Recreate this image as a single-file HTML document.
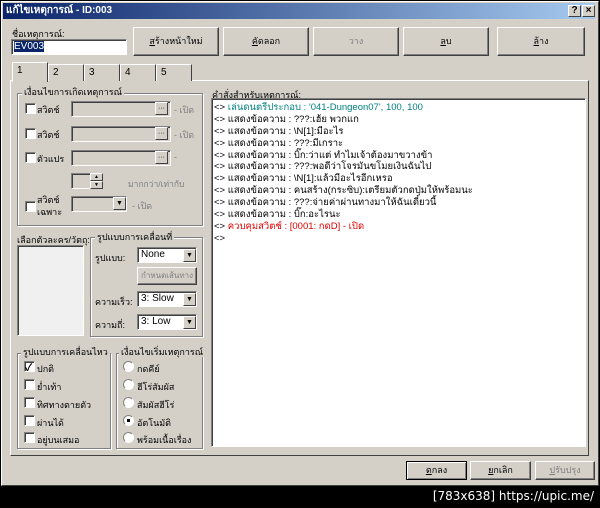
<!DOCTYPE html>
<html><head><meta charset="utf-8"><style>
*{box-sizing:border-box;margin:0;padding:0}
body{width:600px;height:508px;background:#000;position:relative;overflow:hidden;font-family:"Liberation Sans","Noto Sans CJK SC",sans-serif;font-size:9px;color:#000}
.a{position:absolute;white-space:nowrap}
.win{left:1px;top:1px;width:598px;height:485px;background:#d4d0c8;border:1px solid;border-color:#fff #404040 #404040 #fff}
.title{left:3px;top:3px;width:592px;height:16px;background:linear-gradient(90deg,#0a246a,#a6caf0);color:#fff;font-weight:bold;font-size:10px;line-height:16px;padding-left:3px}
.tb{top:5px;width:13px;height:12px;background:#d4d0c8;border:1px solid;border-color:#fff #404040 #404040 #fff;font-size:10px;font-weight:bold;text-align:center;line-height:10px}
.btn{background:#d4d0c8;border:1px solid;border-color:#fff #404040 #404040 #fff;box-shadow:inset -1px -1px #808080;text-align:center;font-size:9px}
.sunk{background:#fff;border:1px solid;border-color:#808080 #fff #fff #808080;box-shadow:inset 1px 1px #404040}
.dis{background:#d4d0c8}
.grp{border:1px solid #808080;box-shadow:1px 1px #fff, inset 1px 1px #fff}
.gl{background:#d4d0c8;padding:0 2px;font-size:9px;line-height:10px}
.cb{width:11px;height:11px;background:#fff;border:1px solid;border-color:#808080 #fff #fff #808080;box-shadow:inset 1px 1px #404040}
.rb{width:11px;height:11px;border-radius:50%;background:#fff;border:1px solid;border-color:#808080 #fff #fff #808080}
.gray{color:#808080}
.tab{top:64px;height:17px;border:1px solid;border-color:#fff #404040 transparent #fff;border-bottom:none;padding-left:4px;line-height:16px;font-size:10px;background:#d4d0c8}
.list div{height:11.9px;line-height:12px;font-size:9.5px;white-space:nowrap}
.dd{width:13px;height:13px;background:#d4d0c8;border:1px solid;border-color:#fff #404040 #404040 #fff;font-size:7px;text-align:center;line-height:11px}
.v{font-size:10px}
</style></head><body>
<div class="a win"></div>
<div class="a title">แก้ไขเหตุการณ์ - ID:003</div>
<div class="a tb" style="left:568px">?</div>
<div class="a tb" style="left:582px">×</div>

<div class="a" style="left:12px;top:27px">ชื่อเหตุการณ์:</div>
<div class="a sunk" style="left:11px;top:39px;width:116px;height:16px;padding:1px 2px"><span style="background:#0a246a;color:#fff;line-height:12px;font-size:10px">EV003</span></div>
<div class="a btn" style="left:133px;top:27px;width:86px;height:29px;line-height:27px"><u>ส</u>ร้างหน้าใหม่</div>
<div class="a btn" style="left:223px;top:27px;width:86px;height:29px;line-height:27px"><u>คั</u>ดลอก</div>
<div class="a btn gray" style="left:313px;top:27px;width:86px;height:29px;line-height:27px">วาง</div>
<div class="a btn" style="left:403px;top:27px;width:86px;height:29px;line-height:27px"><u>ล</u>บ</div>
<div class="a btn" style="left:497px;top:27px;width:88px;height:29px;line-height:27px"><u>ล้</u>าง</div>

<div class="a" style="left:10px;top:80px;width:579px;height:376px;border:1px solid;border-color:#fff #404040 #404040 #fff"></div>
<div class="a tab" style="left:12px;width:36px;top:62px;height:20px;z-index:2">1</div>
<div class="a tab" style="left:48px;width:36px">2</div>
<div class="a tab" style="left:84px;width:36px">3</div>
<div class="a tab" style="left:120px;width:36px">4</div>
<div class="a tab" style="left:156px;width:36px">5</div>

<div class="a grp" style="left:17px;top:93px;width:186px;height:133px"></div>
<div class="a gl" style="left:22px;top:87px">เงื่อนไขการเกิดเหตุการณ์</div>
<div class="a cb" style="left:25px;top:103px"></div><div class="a" style="left:37px;top:103px">สวิตช์</div>
<div class="a sunk dis" style="left:71px;top:101px;width:100px;height:16px"></div><div class="a dd" style="left:155px;top:102px">···</div><div class="a gray" style="left:174px;top:103px">- เปิด</div>
<div class="a cb" style="left:25px;top:128px"></div><div class="a" style="left:37px;top:128px">สวิตช์</div>
<div class="a sunk dis" style="left:71px;top:126px;width:100px;height:16px"></div><div class="a dd" style="left:155px;top:127px">···</div><div class="a gray" style="left:174px;top:128px">- เปิด</div>
<div class="a cb" style="left:25px;top:152px"></div><div class="a" style="left:37px;top:152px">ตัวแปร</div>
<div class="a sunk dis" style="left:71px;top:150px;width:100px;height:16px"></div><div class="a dd" style="left:155px;top:151px">···</div><div class="a gray" style="left:174px;top:152px">-</div>
<div class="a sunk dis" style="left:71px;top:173px;width:32px;height:16px"></div><div class="a dd" style="left:90px;top:173px;height:8px;line-height:6px;font-size:5px">▲</div><div class="a dd" style="left:90px;top:181px;height:8px;line-height:6px;font-size:5px">▼</div><div class="a gray" style="left:128px;top:177px;font-size:8.5px">มากกว่า/เท่ากับ</div>
<div class="a cb" style="left:25px;top:201px"></div><div class="a" style="left:37px;top:194px;line-height:12px">สวิตช์<br>เฉพาะ</div>
<div class="a sunk dis" style="left:71px;top:196px;width:56px;height:16px"></div><div class="a dd" style="left:113px;top:197px">▼</div><div class="a gray" style="left:132px;top:199px">- เปิด</div>

<div class="a" style="left:17px;top:233px">เลือกตัวละคร/วัตถุ:</div>
<div class="a sunk" style="left:17px;top:245px;width:67px;height:91px;background:#f0f0f0"></div>

<div class="a grp" style="left:90px;top:237px;width:113px;height:100px"></div>
<div class="a gl" style="left:95px;top:232px">รูปแบบการเคลื่อนที่</div>
<div class="a" style="left:95px;top:251px">รูปแบบ:</div>
<div class="a sunk v" style="left:137px;top:247px;width:60px;height:16px;padding:1px 3px">None</div><div class="a dd" style="left:183px;top:249px">▼</div>
<div class="a btn gray" style="left:137px;top:267px;width:60px;height:18px;line-height:16px;font-size:8px">กำหนดเส้นทาง</div>
<div class="a" style="left:95px;top:295px">ความเร็ว:</div>
<div class="a sunk v" style="left:137px;top:291px;width:60px;height:16px;padding:1px 3px">3: Slow</div><div class="a dd" style="left:183px;top:293px">▼</div>
<div class="a" style="left:95px;top:318px">ความถี่:</div>
<div class="a sunk v" style="left:137px;top:314px;width:60px;height:16px;padding:1px 3px">3: Low</div><div class="a dd" style="left:183px;top:316px">▼</div>

<div class="a grp" style="left:17px;top:353px;width:94px;height:96px"></div>
<div class="a gl" style="left:21px;top:347px">รูปแบบการเคลื่อนไหว</div>
<div class="a cb" style="left:24px;top:361px"></div><div class="a" style="left:37px;top:362px">ปกติ</div><div class="a" style="left:25px;top:359px;font-size:10px;font-weight:bold">✓</div>
<div class="a cb" style="left:24px;top:379px"></div><div class="a" style="left:37px;top:380px">ย่ำเท้า</div>
<div class="a cb" style="left:24px;top:397px"></div><div class="a" style="left:37px;top:398px">ทิศทางตายตัว</div>
<div class="a cb" style="left:24px;top:415px"></div><div class="a" style="left:37px;top:416px">ผ่านได้</div>
<div class="a cb" style="left:24px;top:432px"></div><div class="a" style="left:37px;top:433px">อยู่บนเสมอ</div>

<div class="a grp" style="left:116px;top:353px;width:87px;height:96px"></div>
<div class="a gl" style="left:119px;top:347px">เงื่อนไขเริ่มเหตุการณ์</div>
<div class="a rb" style="left:123px;top:361px"></div><div class="a" style="left:137px;top:362px">กดคีย์</div>
<div class="a rb" style="left:123px;top:379px"></div><div class="a" style="left:137px;top:380px">ฮีโร่สัมผัส</div>
<div class="a rb" style="left:123px;top:397px"></div><div class="a" style="left:137px;top:398px">สัมผัสฮีโร่</div>
<div class="a rb" style="left:123px;top:415px"><div style="width:3px;height:3px;background:#000;margin:3px"></div></div><div class="a" style="left:137px;top:416px">อัตโนมัติ</div>
<div class="a rb" style="left:123px;top:432px"></div><div class="a" style="left:137px;top:433px">พร้อมเนื้อเรื่อง</div>

<div class="a" style="left:212px;top:88px">คำสั่งสำหรับเหตุการณ์:</div>
<div class="a sunk list" style="left:211px;top:98px;width:375px;height:349px;padding:3px 2px">
<div>&lt;&gt; <span style="color:#008080">เล่นดนตรีประกอบ : '041-Dungeon07', 100, 100</span></div>
<div>&lt;&gt; แสดงข้อความ : ???:เฮ้ย พวกแก</div>
<div>&lt;&gt; แสดงข้อความ : \N[1]:มีอะไร</div>
<div>&lt;&gt; แสดงข้อความ : ???:มีเกราะ</div>
<div>&lt;&gt; แสดงข้อความ : บิ๊ก:ว่าแต่ ทำไมเจ้าต้องมาขวางข้า</div>
<div>&lt;&gt; แสดงข้อความ : ???:พอดีว่าโจรมันขโมยเงินฉันไป</div>
<div>&lt;&gt; แสดงข้อความ : \N[1]:แล้วมีอะไรอีกเหรอ</div>
<div>&lt;&gt; แสดงข้อความ : คนสร้าง(กระซิบ):เตรียมตัวกดปุ่มให้พร้อมนะ</div>
<div>&lt;&gt; แสดงข้อความ : ???:จ่ายค่าผ่านทางมาให้ฉันเดี๋ยวนี้</div>
<div>&lt;&gt; แสดงข้อความ : บิ๊ก:อะไรนะ</div>
<div>&lt;&gt; <span style="color:#e00000">ควบคุมสวิตช์ : [0001: กดD] - เปิด</span></div>
<div>&lt;&gt;</div>
</div>

<div class="a btn" style="left:406px;top:461px;width:61px;height:19px;line-height:17px;border-color:#000;box-shadow:inset 1px 1px #fff,inset -1px -1px #808080"><u>ต</u>กลง</div>
<div class="a btn" style="left:470px;top:461px;width:61px;height:19px;line-height:17px"><u>ย</u>กเลิก</div>
<div class="a btn gray" style="left:535px;top:461px;width:60px;height:19px;line-height:17px"><u>ป</u>รับปรุง</div>

<div class="a" style="right:6px;top:489px;color:#fff;font-size:12px;font-family:'DejaVu Sans',sans-serif">[783x638] https://upic.me/</div>
</body></html>
